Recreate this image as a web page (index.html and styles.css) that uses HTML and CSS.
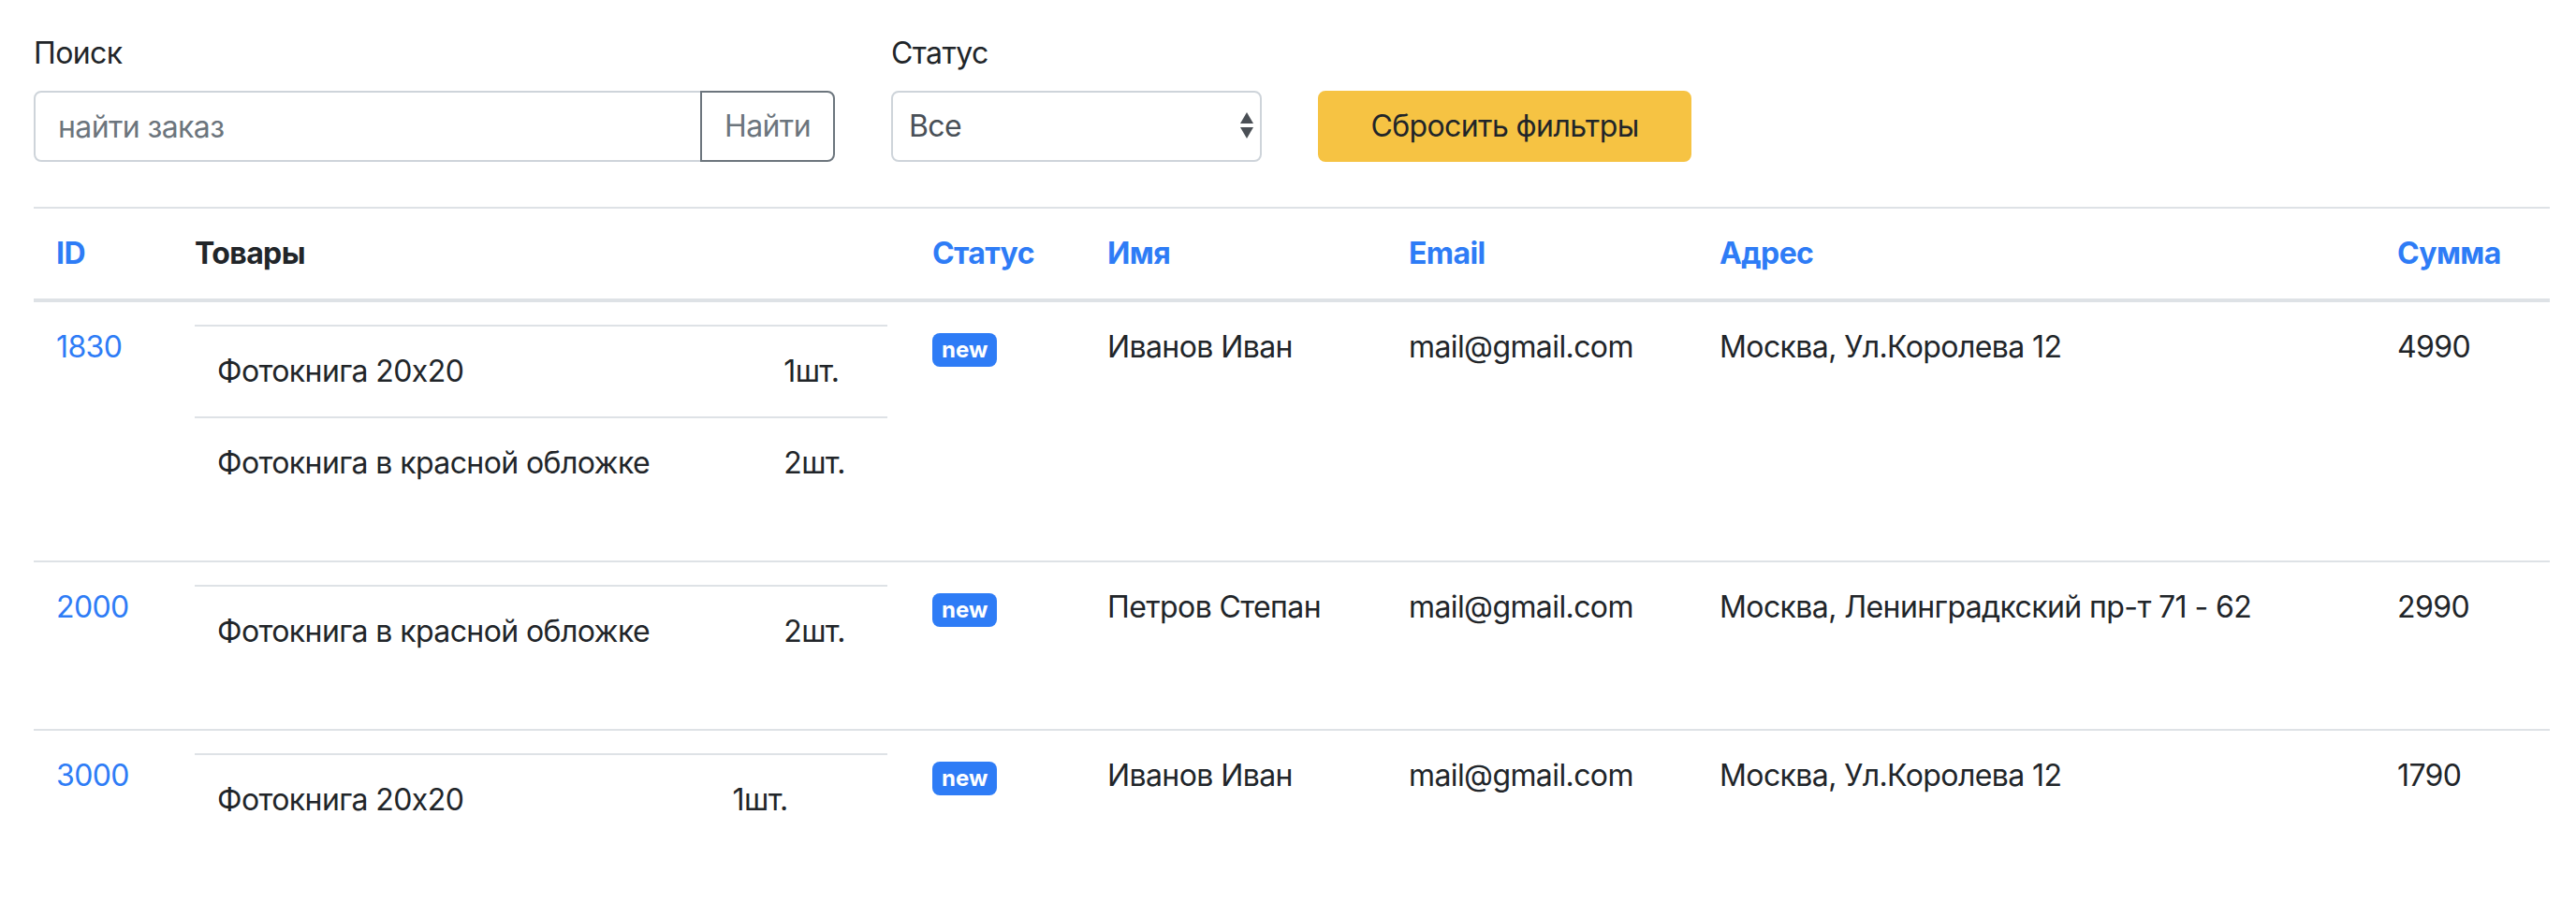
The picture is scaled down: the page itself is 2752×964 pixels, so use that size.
FILE: index.html
```html
<!DOCTYPE html>
<html lang="ru">
<head>
<meta charset="utf-8">
<title>Заказы</title>
<link rel="stylesheet" href="styles.css">
</head>
<body>
<div class="page">
  <form class="filters">
    <div class="field field-search">
      <label class="field-label">Поиск</label>
      <div class="input-group">
        <input class="control control-text" type="text" placeholder="найти заказ">
        <button class="btn btn-outline" type="button">Найти</button>
      </div>
    </div>
    <div class="field field-status">
      <label class="field-label">Статус</label>
      <div class="select-wrap">
        <select class="control control-select"><option>Все</option></select>
        <svg class="select-arrows" width="14" height="28" viewBox="0 0 14 28"><polygon points="7,0 14,12 0,12"/><polygon points="0,16 14,16 7,28"/></svg>
      </div>
    </div>
    <div class="field field-reset">
      <button class="btn btn-warning" type="button">Сбросить фильтры</button>
    </div>
  </form>

  <table class="orders">
    <colgroup>
      <col class="c-id"><col class="c-items"><col class="c-status"><col class="c-name"><col class="c-email"><col class="c-addr"><col class="c-sum">
    </colgroup>
    <thead>
      <tr>
        <th><a class="sort">ID</a></th>
        <th>Товары</th>
        <th><a class="sort">Статус</a></th>
        <th><a class="sort">Имя</a></th>
        <th><a class="sort">Email</a></th>
        <th><a class="sort">Адрес</a></th>
        <th><a class="sort">Сумма</a></th>
      </tr>
    </thead>
    <tbody>
      <tr>
        <td><a class="link">1830</a></td>
        <td>
          <table class="items">
            <tr><td>Фотокнига 20x20</td><td>1шт.</td></tr>
            <tr><td>Фотокнига в красной обложке</td><td>2шт.</td></tr>
          </table>
        </td>
        <td><span class="badge">new</span></td>
        <td>Иванов Иван</td>
        <td>mail@gmail.com</td>
        <td>Москва, Ул.Королева 12</td>
        <td>4990</td>
      </tr>
      <tr>
        <td><a class="link">2000</a></td>
        <td>
          <table class="items">
            <tr><td>Фотокнига в красной обложке</td><td>2шт.</td></tr>
          </table>
        </td>
        <td><span class="badge">new</span></td>
        <td>Петров Степан</td>
        <td>mail@gmail.com</td>
        <td>Москва, Ленинградкский пр-т 71 - 62</td>
        <td>2990</td>
      </tr>
      <tr>
        <td><a class="link">3000</a></td>
        <td>
          <table class="items">
            <tr><td>Фотокнига 20x20</td><td>1шт.</td></tr>
          </table>
        </td>
        <td><span class="badge">new</span></td>
        <td>Иванов Иван</td>
        <td>mail@gmail.com</td>
        <td>Москва, Ул.Королева 12</td>
        <td>1790</td>
      </tr>
    </tbody>
  </table>
</div>
</body>
</html>
```

FILE: styles.css
```css
* { box-sizing: border-box; }

html, body {
  margin: 0;
  background: #ffffff;
}

body {
  font-family: Inter, "Liberation Sans", "DejaVu Sans", sans-serif;
  font-size: 32px;
  line-height: 48px;
  letter-spacing: -0.6px;
  color: #212529;
}

.page {
  padding: 33px 28px 0 36px;
}

/* ---------- filters ---------- */
.filters {
  display: flex;
  align-items: flex-end;
  gap: 60px;
  margin: 0 0 48px 0;
}

.field-label {
  display: block;
  margin-bottom: 16px;
}

.field-search { width: 856px; }
.field-status { width: 396px; }

.input-group {
  display: flex;
}

.control {
  height: 76px;
  font: inherit;
  letter-spacing: inherit;
  color: #495057;
  background: #fff;
  border: 2px solid #ced4da;
  outline: none;
}

.control-text {
  flex: 1;
  min-width: 0;
  padding: 0 24px;
  border-radius: 8px 0 0 8px;
}

.control-text::placeholder { color: #6c757d; opacity: 1; }

.select-wrap {
  position: relative;
}

.control-select {
  width: 100%;
  padding: 0 40px 0 17px;
  border-radius: 8px;
  -webkit-appearance: none;
  appearance: none;
}

.select-arrows {
  position: absolute;
  right: 9px;
  top: 23px;
  fill: #4a4f55;
}

.btn {
  height: 76px;
  padding: 0 24px;
  font: inherit;
  letter-spacing: inherit;
  border: 2px solid transparent;
  border-radius: 8px;
  cursor: pointer;
  white-space: nowrap;
}

.btn-outline {
  margin-left: -2px;
  color: #6c757d;
  background: #fff;
  border-color: #6c757d;
  border-radius: 0 8px 8px 0;
}

.btn-warning {
  width: 399px;
  color: #212529;
  background: #f6c343;
  border-color: #f6c343;
}

/* ---------- table ---------- */
.orders {
  width: 100%;
  border-collapse: collapse;
  table-layout: fixed;
}

.c-id { width: 148px; }
.c-items { width: 788px; }
.c-status { width: 187px; }
.c-name { width: 322px; }
.c-email { width: 332px; }
.c-addr { width: 724px; }
.c-sum { width: 187px; }

.orders th,
.orders td {
  padding: 24px;
  text-align: left;
  vertical-align: top;
  border-top: 2px solid #dee2e6;
}

.orders thead th {
  font-weight: 700;
  border-bottom: 4px solid #dee2e6;
}

.sort,
.link {
  color: #2e7cf6;
  text-decoration: none;
}

.items {
  width: 100%;
  border-collapse: collapse;
  margin-bottom: 32px;
}

.orders .items td {
  padding: 24px;
  border-top: 2px solid #dee2e6;
  white-space: nowrap;
}

.badge {
  display: inline-block;
  padding: 6px 10px;
  font-size: 24px;
  font-weight: 700;
  line-height: 1;
  letter-spacing: 0;
  color: #fff;
  background: #2e7cf6;
  border-radius: 8px;
  vertical-align: baseline;
}
```
